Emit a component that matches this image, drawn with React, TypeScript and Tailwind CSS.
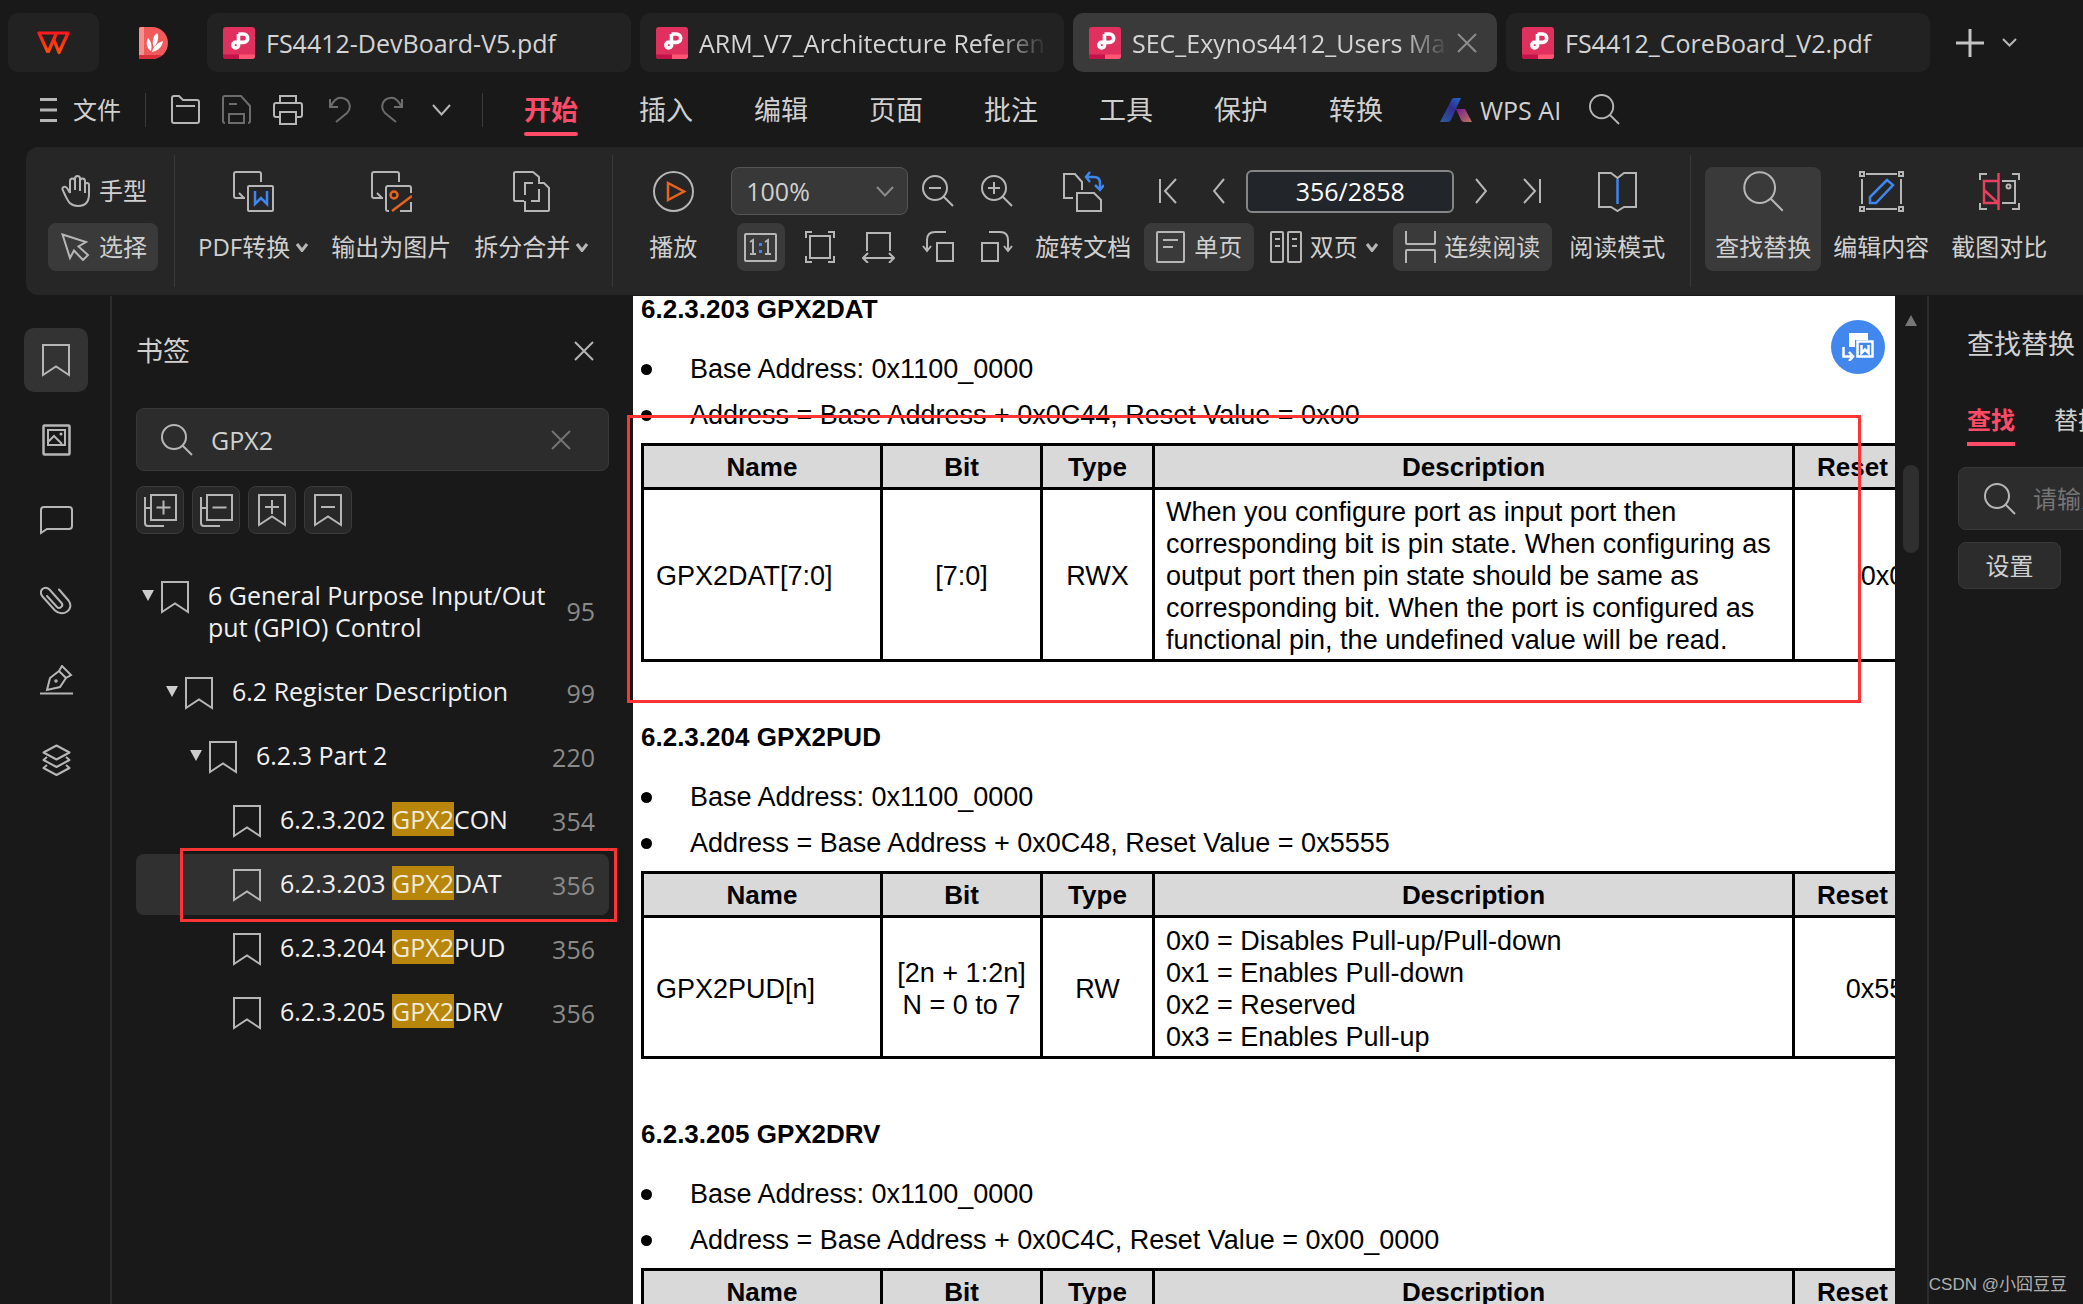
import React from 'react';
import type { ReactNode } from 'react';

const GREY = '#b6b6b6';

function Icon({ w = 32, h = 32, sw = 2, color = GREY, children }: { w?: number; h?: number; sw?: number; color?: string; children: ReactNode }) {
  return (
    <svg width={w} height={h} viewBox={`0 0 ${w} ${h}`} fill="none" stroke={color} strokeWidth={sw} className="shrink-0" aria-hidden="true">
      {children}
    </svg>
  );
}

const Chevron = ({ w = 12, h = 8, sw = 2, color = GREY }: { w?: number; h?: number; sw?: number; color?: string }) => (
  <Icon w={w} h={h} sw={sw} color={color}>
    <path d={`M1 1L${w / 2} ${h - 1.5}L${w - 1} 1`} />
  </Icon>
);

const SearchIcon = ({ s = 32, color = GREY }: { s?: number; color?: string }) => (
  <svg width={s} height={s} viewBox="0 0 32 32" fill="none" stroke={color} strokeWidth={s > 32 ? 1.6 : 2} className="shrink-0" aria-hidden="true">
    <circle cx="13" cy="13" r="12" />
    <path d="M21.5 21.5L31 31" />
  </svg>
);

const Cross = ({ s = 20, color = GREY }: { s?: number; color?: string }) => (
  <Icon w={s} h={s} color={color}>
    <path d={`M1 1L${s - 1} ${s - 1}M${s - 1} 1L1 ${s - 1}`} />
  </Icon>
);

const PdfIcon = () => (
  <svg width="32" height="32" viewBox="0 0 32 32" fill="none" className="shrink-0" aria-hidden="true">
    <rect width="32" height="32" rx="3" fill="#e0315e" />
    <path d="M0 27.500H16V32H3Q0 32 0 29Z" fill="#c4134a" />
    <path d="M16 27.500H32V29Q32 32 29 32H16Z" fill="#ff5575" />
    <path d="M15.500 7H20.500A4.200 4.200 0 0 1 20.500 15.400H11.500A2.900 2.900 0 1 0 15.500 19V7" stroke="#fff" strokeWidth="3.600" strokeLinejoin="round" />
  </svg>
);

const BookmarkIcon = ({ inner }: { inner?: 'plus' | 'minus' }) => (
  <Icon w={28} h={33}>
    <path d="M1 1H27V31L14 22.500L1 31Z" />
    {inner && <path d={inner === 'plus' ? 'M7 13H21M14 6V20' : 'M7 13H21'} />}
  </Icon>
);

const StackIcon = ({ plus }: { plus: boolean }) => (
  <Icon w={33} h={33}>
    <rect x="7" y="1" width="25" height="25" />
    <path d="M1 3V29Q1 32 4 32H20M1 14H7" />
    <path d={plus ? 'M12.500 13.500H26.500M19.500 6.500V20.500' : 'M12.500 13.500H26.500'} />
  </Icon>
);

const tabs = [
  { name: 'FS4412-DevBoard-V5.pdf' },
  { name: 'ARM_V7_Architecture Reference', fade: true },
  { name: 'SEC_Exynos4412_Users Manual', active: true, fade: true },
  { name: 'FS4412_CoreBoard_V2.pdf' },
];

function TabBar() {
  return (
    <header className="flex h-[76px] shrink-0 items-start pt-[13px] pl-2">
      <button aria-label="WPS" className="flex h-[59px] w-[91px] shrink-0 items-center justify-center rounded-[10px] bg-[#222222]">
        <svg width="33" height="24" viewBox="0 0 33 24" fill="none" aria-hidden="true">
          <defs>
            <linearGradient id="wps" x1="0" y1="0" x2="0" y2="24" gradientUnits="userSpaceOnUse">
              <stop stopColor="#ff1420" />
              <stop offset="1" stopColor="#ff5400" />
            </linearGradient>
          </defs>
          <path d="M11 21.500L2 2H19.500L11 21.500M17 9L22 21.500L31 2H19.500L16 11" stroke="url(#wps)" strokeWidth="3.200" strokeLinejoin="round" />
        </svg>
      </button>
      <button aria-label="稻壳" className="ml-10 flex h-[59px] shrink-0 items-center">
        <svg width="29" height="32" viewBox="0 0 29 32" aria-hidden="true">
          <path d="M2 0H13C22 0 29 7 29 16S22 32 13 32H2Q0 32 0 30V2Q0 0 2 0Z" fill="#f05a5a" />
          <path d="M0 2Q0 0 2 0H5V32H2Q0 32 0 30Z" fill="#f79090" />
          <path d="M0 28H23Q18 32 13 32H2Q0 32 0 30Z" fill="#d92f3a" />
          <path d="M18 6C21 10 18 18 14.500 20C13 14 14 9 18 6ZM9 11C13 15 13 20 12 24C7 21 7 15 9 11ZM24 14C23 21 18 24 13 25C15 18 19 16 24 14Z" fill="#fff" />
        </svg>
      </button>
      <nav aria-label="文档" className="ml-[39px] flex gap-[9px]">
        {tabs.map((t) => (
          <div key={t.name} className={t.active ? 'flex h-[59px] w-[424px] items-center rounded-[10px] bg-[#3a3a3a] px-4' : 'flex h-[59px] w-[424px] items-center rounded-[10px] bg-[#222222] px-4'}>
            <PdfIcon />
            <button
              className={
                t.fade
                  ? 'ml-[11px] min-w-0 flex-1 overflow-hidden text-left text-[25px] leading-[34px] whitespace-nowrap text-[#d4d4d4] [mask-image:linear-gradient(to_right,black_85%,transparent)]'
                  : 'ml-[11px] min-w-0 flex-1 overflow-hidden text-left text-[25px] leading-[34px] whitespace-nowrap text-[#d4d4d4]'
              }
            >
              {t.name}
            </button>
            {t.active && (
              <button aria-label="关闭标签" className="mr-1 ml-2">
                <Cross s={20} color="#8c8c8c" />
              </button>
            )}
          </div>
        ))}
      </nav>
      <button aria-label="新建" className="ml-[26px] flex h-[59px] items-center">
        <Icon w={28} h={28} sw={3} color="#c4c4c4">
          <path d="M14 0V28M0 14H28" />
        </Icon>
      </button>
      <button aria-label="更多标签" className="ml-[18px] flex h-[59px] items-center">
        <Chevron w={15} h={9} />
      </button>
    </header>
  );
}

const menus = ['开始', '插入', '编辑', '页面', '批注', '工具', '保护', '转换'];

function MenuBar() {
  return (
    <div className="flex h-[71px] shrink-0 items-center pb-1 pl-10">
      <button className="flex items-center gap-4 text-[24px] leading-9">
        <Icon w={17} h={24} sw={3}>
          <path d="M0 1.500H17M0 12H17M0 22.500H17" />
        </Icon>
        文件
      </button>
      <span className="mr-[25px] ml-6 h-[34px] w-px bg-[#3a3a3a]" />
      <div className="flex items-center gap-[22px]">
        <button aria-label="打开">
          <Icon w={29} h={29}>
            <path d="M1 26V3Q1 1 3 1H8L12 5H26Q28 5 28 7V26Q28 28 26 28H3Q1 28 1 26ZM5 11H24" />
          </Icon>
        </button>
        <button aria-label="保存">
          <Icon w={29} h={29} color="#6c6c6c">
            <path d="M3 28Q1 28 1 26V3Q1 1 3 1H19L28 11V26Q28 28 26 28M7 9H15M7 28V19H22V28ZM7 28" />
          </Icon>
        </button>
        <button aria-label="打印">
          <Icon w={30} h={30}>
            <path d="M7 8V1H23V8M6 22H3Q1 22 1 20V10Q1 8 3 8H27Q29 8 29 10V20Q29 22 27 22H24M7 17H23V29H7Z" />
          </Icon>
        </button>
        <button aria-label="撤销" className="ml-1">
          <Icon w={22} h={27} color="#6c6c6c">
            <path d="M1 3V11H9M2 10C5 4 9 1 13 2C21 3 23 12 18 17L7 26" />
          </Icon>
        </button>
        <button aria-label="恢复" className="ml-2">
          <Icon w={22} h={27} color="#6c6c6c">
            <path d="M21 3V11H13M20 10C17 4 13 1 9 2C1 3 -1 12 4 17L15 26" />
          </Icon>
        </button>
        <button aria-label="更多" className="ml-[7px]">
          <Chevron w={19} h={12} />
        </button>
      </div>
      <span className="mr-[41px] ml-[31px] h-[34px] w-px bg-[#3a3a3a]" />
      <nav className="flex gap-[61px] text-[27px] leading-[40px]">
        {menus.map((m, i) => (
          <button key={m} className={i === 0 ? 'relative font-bold whitespace-nowrap text-[#ff4a68]' : 'whitespace-nowrap'}>
            {m}
            {i === 0 && <span className="absolute inset-x-0 -bottom-1.5 h-1 rounded-xs bg-[#ff4a68]" />}
          </button>
        ))}
      </nav>
      <button className="ml-[57px] flex items-center gap-2 text-[25px] leading-9 whitespace-nowrap">
        <svg width="32" height="24" viewBox="0 0 32 24" aria-hidden="true">
          <defs>
            <linearGradient id="aiBlue" x1="0" y1="24" x2="20" y2="0" gradientUnits="userSpaceOnUse">
              <stop stopColor="#2c5c9c" />
              <stop offset="0.6" stopColor="#322d92" />
              <stop offset="1" stopColor="#1f66c8" />
            </linearGradient>
            <linearGradient id="aiPink" x1="18" y1="11" x2="30" y2="24" gradientUnits="userSpaceOnUse">
              <stop stopColor="#7a2090" />
              <stop offset="1" stopColor="#b8705c" />
            </linearGradient>
          </defs>
          <path d="M12 1Q13 0 14 0H21L11 22Q10 24 8 24H0Z" fill="url(#aiBlue)" />
          <path d="M16 11H25L32 24H24Q22 24 21 22Z" fill="url(#aiPink)" />
        </svg>
        WPS AI
      </button>
      <button aria-label="搜索功能" className="ml-7">
        <SearchIcon s={31} />
      </button>
    </div>
  );
}

const Divider = () => <span className="h-[132px] w-px shrink-0 bg-[#393939]" />;

function BigTool({ label, icon, menu, active }: { label: string; icon: ReactNode; menu?: boolean; active?: boolean }) {
  return (
    <button className={active ? 'flex h-[104px] shrink-0 flex-col items-center gap-2 rounded-lg bg-[#3a3a3a] px-[10px]' : 'flex h-[104px] shrink-0 flex-col items-center gap-2'}>
      <span className="flex h-12 items-center">{icon}</span>
      <span className="flex h-12 items-center gap-1.5 whitespace-nowrap">
        {label}
        {menu && <Chevron w={12} h={9} sw={3} />}
      </span>
    </button>
  );
}

function Ribbon() {
  return (
    <section aria-label="工具栏" className="ml-[26px] flex h-[148px] shrink-0 items-center overflow-hidden rounded-l-xl bg-[#262626] text-[24px] leading-9">
      <div className="mr-4 ml-[22px] flex w-[110px] shrink-0 flex-col gap-2 pb-1">
        <button className="flex h-12 items-center gap-[9px] rounded-lg px-[13px] whitespace-nowrap">
          <Icon w={29} h={32}>
            <path d="M9 18V6a2.500 2.500 0 0 1 5 0V15M14 15V3.500a2.500 2.500 0 0 1 5 0V15M19 16V6a2.500 2.500 0 0 1 5 0V10M24 18V10a2 2 0 0 1 4 0V19C28 27 24 31 17 31C9 31 7 26 5 22L1.500 14.500C1 12 4 10.500 6 13L9 18" />
          </Icon>
          手型
        </button>
        <button className="flex h-12 items-center gap-[9px] rounded-lg bg-[#3a3a3a] px-[13px] whitespace-nowrap">
          <Icon w={29} h={28}>
            <path d="M1.500 1.500L25 9L17.500 13.500L27 22L22 27L13 17.500L9 25Z" />
          </Icon>
          选择
        </button>
      </div>
      <Divider />
      <div className="flex shrink-0 gap-[23px] pr-6 pb-1 pl-[23px]">
        <BigTool
          label="PDF转换"
          menu
          icon={
            <Icon w={41} h={41}>
              <path d="M12 27H3Q1 27 1 25V3Q1 1 3 1H26Q28 1 28 3V11M6 22L11 27" />
              <rect x="15" y="15" width="25" height="25" rx="1" />
              <path d="M22 20V33L28 27L34 33V20" stroke="#3f86f0" strokeWidth="2.500" />
            </Icon>
          }
        />
        <BigTool
          label="输出为图片"
          icon={
            <Icon w={41} h={41}>
              <path d="M12 27H3Q1 27 1 25V3Q1 1 3 1H26Q28 1 28 3V11M6 22L11 27M18 40H17Q15 40 15 38V17Q15 15 17 15H38Q40 15 40 17V22M40 31V40H29" />
              <circle cx="23" cy="24" r="3.500" stroke="#e8641e" strokeWidth="2.500" />
              <path d="M21 40L41 25" stroke="#e8641e" strokeWidth="2.500" />
            </Icon>
          }
        />
        <BigTool
          label="拆分合并"
          menu
          icon={
            <Icon w={37} h={41}>
              <path d="M11 30H2Q1 30 1 28V2Q1 1 3 1H20L26 6V12H31L36 17V39Q36 40 34 40H12V30M12 24V12H20M26 18V30H18" />
            </Icon>
          }
        />
      </div>
      <Divider />
      <div className="ml-9 flex shrink-0 pb-1">
        <BigTool
          label="播放"
          icon={
            <Icon w={41} h={41}>
              <circle cx="20.500" cy="20.500" r="19.500" />
              <path d="M15 12V29L31 20.500Z" stroke="#e8641e" strokeWidth="2.500" />
            </Icon>
          }
        />
      </div>
      <div className="ml-[34px] grid w-[295px] shrink-0 grid-cols-5 gap-y-2 pb-1">
        <div className="relative col-span-3 h-12">
          <select aria-label="缩放比例" defaultValue="100%" className="h-12 w-full appearance-none rounded-lg border border-[#555555] bg-[#383838] px-3.5 text-[25px] leading-9">
            <option>100%</option>
          </select>
          <span className="pointer-events-none absolute top-[19px] right-[14px]">
            <Chevron w={18} h={11} color="#8a8a8a" />
          </span>
        </div>
        <button aria-label="缩小" className="flex h-12 items-center justify-center">
          <Icon>
            <circle cx="13" cy="13" r="12" />
            <path d="M21.500 21.500L31 31M7 13H19" />
          </Icon>
        </button>
        <button aria-label="放大" className="flex h-12 items-center justify-center">
          <Icon>
            <circle cx="13" cy="13" r="12" />
            <path d="M21.500 21.500L31 31M7 13H19M13 7V19" />
          </Icon>
        </button>
        <button aria-label="实际大小" className="mx-auto flex size-12 items-center justify-center rounded-lg bg-[#3a3a3a]">
          <Icon w={33} h={29}>
            <rect x="1" y="1" width="31" height="27" rx="1" />
            <path d="M6 9L9 7V21M6 21H12M21 9L24 7V21M21 21H27" />
            <path d="M16.500 10V13M16.500 17V20" stroke="#3f86f0" strokeWidth="3" />
          </Icon>
        </button>
        <button aria-label="适合页面" className="flex h-12 items-center justify-center">
          <Icon w={30} h={32}>
            <path d="M1 7V1H7M23 1H29V7M29 25V31H23M7 31H1V25" />
            <rect x="5" y="5" width="20" height="22" />
          </Icon>
        </button>
        <button aria-label="适合宽度" className="flex h-12 items-center justify-center">
          <Icon w={33} h={32}>
            <path d="M5 20V2H28V20M1 27H32M6 22L1 27L6 32M27 22L32 27L27 32" />
          </Icon>
        </button>
        <button aria-label="向左旋转" className="flex h-12 items-center justify-center">
          <Icon>
            <rect x="15" y="12" width="16" height="18" />
            <path d="M24 1H13Q5 1 5 9V20M1 15L5 20L9 15" />
          </Icon>
        </button>
        <button aria-label="向右旋转" className="flex h-12 items-center justify-center">
          <Icon>
            <rect x="1" y="12" width="16" height="18" />
            <path d="M8 1H19Q27 1 27 9V20M23 15L27 20L31 15" />
          </Icon>
        </button>
      </div>
      <div className="ml-[9px] flex shrink-0 pb-1">
        <BigTool
          label="旋转文档"
          icon={
            <Icon w={41} h={41}>
              <path d="M10 27H1V3H12L19 11V19M14 40V22H31L38 29V40Z" />
              <path d="M23 6H31Q37 6 37 12V18M27 1L23 6L27 11M32 14L37 19L41 14" stroke="#3f86f0" strokeWidth="2.500" />
            </Icon>
          }
        />
      </div>
      <div className="ml-[13px] flex w-[408px] shrink-0 flex-col gap-2 pb-1">
        <div className="flex h-12 items-center pr-[11px] pl-[15px]">
          <button aria-label="第一页">
            <Icon w={18} h={26}>
              <path d="M1 1V25M17 1L6 13L17 25" />
            </Icon>
          </button>
          <button aria-label="上一页" className="ml-9">
            <Icon w={12} h={26}>
              <path d="M11 1L1 13L11 25" />
            </Icon>
          </button>
          <input aria-label="页码" defaultValue="356/2858" className="mx-[21px] h-[43px] min-w-0 flex-1 rounded-md border-2 border-[#858585] bg-[#22262b] text-center text-[25px] leading-9 text-white" />
          <button aria-label="下一页">
            <Icon w={12} h={26}>
              <path d="M1 1L11 13L1 25" />
            </Icon>
          </button>
          <button aria-label="最后一页" className="ml-9">
            <Icon w={18} h={26}>
              <path d="M17 1V25M1 1L12 13L1 25" />
            </Icon>
          </button>
        </div>
        <div className="flex h-12 items-center justify-between whitespace-nowrap">
          <button className="flex h-12 items-center gap-[9px] rounded-lg bg-[#3a3a3a] px-3">
            <Icon w={29} h={32}>
              <rect x="1" y="1" width="27" height="30" rx="1" />
              <path d="M7 9H22M7 16H17" />
            </Icon>
            单页
          </button>
          <button className="flex h-12 items-center gap-2">
            <Icon>
              <rect x="1" y="1" width="12" height="30" rx="1" />
              <rect x="18" y="1" width="13" height="30" rx="1" />
              <path d="M5 8H10M5 15H10M22 8H27M22 15H27" />
            </Icon>
            双页
            <Chevron w={12} h={9} sw={3} />
          </button>
          <button className="flex h-12 items-center gap-2 rounded-lg bg-[#3a3a3a] px-3">
            <Icon w={31} h={32}>
              <path d="M1 0V12Q1 13 2 13H29Q30 13 30 12V0M1 32V20Q1 19 2 19H29Q30 19 30 20V32" />
            </Icon>
            连续阅读
          </button>
        </div>
      </div>
      <div className="mr-[25px] ml-[17px] flex shrink-0 pb-1">
        <BigTool
          label="阅读模式"
          icon={
            <Icon w={39} h={41}>
              <path d="M1 2H13L19.500 7L26 2H38V36H26L19.500 40L13 36H1Z" />
              <path d="M19.500 8V33" stroke="#3f86f0" strokeWidth="2.500" />
            </Icon>
          }
        />
      </div>
      <Divider />
      <div className="ml-[14px] flex shrink-0 gap-[22px] pb-1">
        <div className="-mr-[10px]">
          <BigTool label="查找替换" active icon={<SearchIcon s={41} />} />
        </div>
        <BigTool
          label="编辑内容"
          icon={
            <Icon w={45} h={41}>
              <path d="M7 3H38M7 38H38M3 8V33M42 8V33" />
              <path d="M1 1H5V5H1ZM40 1H44V5H40ZM1 36H5V40H1ZM40 36H44V40H40Z" />
              <path d="M11 32V26L28 9L34 14L17 32Z" stroke="#3f86f0" strokeWidth="2.500" />
            </Icon>
          }
        />
        <BigTool
          label="截图对比"
          icon={
            <Icon w={41} h={41}>
              <path d="M1 9V3H8M33 3H40V9M40 32V38H33M8 38H1V32M23 10H36V32H23" />
              <circle cx="29.500" cy="15.500" r="2" />
              <path d="M19.500 2V39M19 10H5V32H19M5 19L19 32" stroke="#e8405c" strokeWidth="2.500" />
            </Icon>
          }
        />
      </div>
    </section>
  );
}

function SideRail() {
  const cell = 'flex size-16 items-center justify-center rounded-[10px]';
  return (
    <aside className="flex w-[112px] shrink-0 flex-col gap-4 border-r-2 border-[#2c2c2c] pt-8 pl-6">
      <button aria-label="书签" className="flex size-16 items-center justify-center rounded-[10px] bg-[#333333]">
        <BookmarkIcon />
      </button>
      <button aria-label="缩略图" className={cell}>
        <Icon w={29} h={32} sw={2.5}>
          <rect x="1.500" y="1.500" width="26" height="29" rx="1" />
          <rect x="6" y="6" width="17" height="15" strokeWidth="2" />
          <path d="M6 18L12 12L20 20" strokeWidth="2" />
          <circle cx="19" cy="10" r="0.800" strokeWidth="1.500" />
        </Icon>
      </button>
      <button aria-label="批注" className={cell}>
        <Icon w={33} h={29}>
          <path d="M1 27V4Q1 1 4 1H29Q32 1 32 4V20Q32 23 29 23H7Z" />
        </Icon>
      </button>
      <button aria-label="附件" className={cell}>
        <Icon w={32} h={30}>
          <path d="M7 11L17 22C19.500 24.500 24 21 21.500 18L9.500 4.500C4.500 -0.500 -2 6 2.500 11.500L15 25.500C23 33 35 24 28.500 15.500L19 4.500" strokeLinecap="round" />
        </Icon>
      </button>
      <button aria-label="签名" className={cell}>
        <Icon w={33} h={30}>
          <path d="M7 25L10 13L19 6L26 13L20 22ZM19 6L22 1L31 10L26 13M0 28.500H33" />
          <circle cx="16" cy="16" r="0.800" />
        </Icon>
      </button>
      <button aria-label="图层" className={cell}>
        <Icon w={29} h={32}>
          <path d="M14.500 1.500L27.500 8.500L14.500 15.500L1.500 8.500ZM5 13L1.500 16L14.500 23L27.500 16L24 13M5 21L1.500 24L14.500 31L27.500 24L24 21" strokeLinejoin="round" />
        </Icon>
      </button>
    </aside>
  );
}

type TreeNode = { indent: string; label: ReactNode; page: number; open?: boolean; selected?: boolean };

const Hit = () => <mark className="bg-[#b8860b] text-[#f0ead8]">GPX2</mark>;

const nodes: TreeNode[] = [
  { indent: 'pl-1.5', label: <>6 General Purpose Input/Out<br />put (GPIO) Control</>, page: 95, open: true },
  { indent: 'pl-[30px]', label: '6.2 Register Description', page: 99, open: true },
  { indent: 'pl-[54px]', label: '6.2.3 Part 2', page: 220, open: true },
  { indent: 'pl-[78px]', label: <>6.2.3.202 <Hit />CON</>, page: 354 },
  { indent: 'pl-[78px]', label: <>6.2.3.203 <Hit />DAT</>, page: 356, selected: true },
  { indent: 'pl-[78px]', label: <>6.2.3.204 <Hit />PUD</>, page: 356 },
  { indent: 'pl-[78px]', label: <>6.2.3.205 <Hit />DRV</>, page: 356 },
];

function BookmarkPanel() {
  const tool = 'flex size-12 items-center justify-center rounded-lg border border-[#3a3a3a] bg-[#282828]';
  return (
    <section aria-label="书签" className="w-[521px] shrink-0 px-6 pt-[35px]">
      <div className="flex items-center justify-between pr-[15px]">
        <h2 className="text-[27px] leading-[40px]">书签</h2>
        <button aria-label="关闭">
          <Cross s={20} />
        </button>
      </div>
      <div className="mt-[37px] flex h-[63px] items-center rounded-lg border border-[#383838] bg-[#2c2c2c] pr-[37px] pl-6">
        <SearchIcon s={32} />
        <input aria-label="搜索书签" defaultValue="GPX2" className="ml-[18px] min-w-0 flex-1 text-[25px] leading-9" />
        <button aria-label="清除">
          <Cross s={20} color="#747474" />
        </button>
      </div>
      <div className="mt-[15px] flex gap-2">
        <button aria-label="全部展开" className={tool}><StackIcon plus /></button>
        <button aria-label="全部折叠" className={tool}><StackIcon plus={false} /></button>
        <button aria-label="添加书签" className={tool}><BookmarkIcon inner="plus" /></button>
        <button aria-label="删除书签" className={tool}><BookmarkIcon inner="minus" /></button>
      </div>
      <ul className="mt-8">
        {nodes.map((n, i) => (
          <li key={i} className={i === 0 ? 'relative pb-1.5' : 'relative pb-[3px]'}>
            <div className={n.selected ? 'rounded-lg bg-[#303030]' : ''}>
              <div className={`flex items-start py-[13px] pr-3.5 ${n.indent}`}>
                <span className="flex h-8 w-[19px] shrink-0 items-center">
                  {n.open && (
                    <svg width="12" height="12" viewBox="0 0 12 12" aria-hidden="true">
                      <path d="M0 1H12L6 12Z" fill="#cccccc" />
                    </svg>
                  )}
                </span>
                <span className="mt-0.5 flex"><BookmarkIcon /></span>
                <a href="#bookmark" className="ml-[19px] min-w-0 flex-1 text-[25px] leading-8 whitespace-nowrap text-[#f0f0f0]">{n.label}</a>
                <span className="self-center text-[25px] leading-8 text-[#8a8a8a]">{n.page}</span>
              </div>
            </div>
            {n.selected && <span className="pointer-events-none absolute -top-1.5 -right-2 -bottom-1 left-[44px] border-[3px] border-[#ff3434]" />}
          </li>
        ))}
      </ul>
    </section>
  );
}

type Row = { name: string; bit: ReactNode; type: string; desc: string[]; reset: string };

function RegisterSection({ title, address, row, rowClass }: { title: string; address: string; row?: Row; rowClass?: string }) {
  const th = 'border-[3px] border-black bg-[#d9d9d9] p-0 font-bold';
  const td = 'border-[3px] border-black px-0 pt-[3px] pb-0 text-center';
  return (
    <section>
      <h3 className="text-[26px] leading-[26px] font-bold">{title}</h3>
      <ul className="mt-6 text-[27px] leading-[46px]">
        {['Base Address: 0x1100_0000', address].map((line) => (
          <li key={line} className="flex items-center whitespace-nowrap">
            <span className="mr-[38px] size-[11px] rounded-full bg-black" />
            {line}
          </li>
        ))}
      </ul>
      <table className="mt-[5px] w-[1344px] table-fixed border-collapse text-[27px] leading-8">
        <colgroup>
          <col className="w-[239px]" />
          <col className="w-[160px]" />
          <col className="w-[112px]" />
          <col className="w-[640px]" />
          <col className="w-[193px]" />
        </colgroup>
        <thead>
          <tr className="h-11 text-[26px]">
            <th className={th}>Name</th>
            <th className={th}>Bit</th>
            <th className={th}>Type</th>
            <th className={th}>Description</th>
            <th className={th}>Reset Value</th>
          </tr>
        </thead>
        {row && (
          <tbody>
            <tr className={rowClass}>
              <td className="border-[3px] border-black pt-[3px] pr-0 pb-0 pl-3">{row.name}</td>
              <td className={td}>{row.bit}</td>
              <td className={td}>{row.type}</td>
              <td className="border-[3px] border-black pt-[3px] pr-0 pb-0 pl-[11px] whitespace-nowrap">
                {row.desc.map((d) => <div key={d}>{d}</div>)}
              </td>
              <td className={td}>{row.reset}</td>
            </tr>
          </tbody>
        )}
      </table>
    </section>
  );
}

function DocumentView() {
  return (
    <main className="relative min-w-0 flex-1 bg-white font-['Liberation_Sans',sans-serif] text-black">
      <div className="flex h-full flex-col gap-[62px] overflow-hidden pl-2">
        <RegisterSection
          title="6.2.3.203 GPX2DAT"
          address="Address = Base Address + 0x0C44, Reset Value = 0x00"
          rowClass="h-[172px]"
          row={{
            name: 'GPX2DAT[7:0]',
            bit: '[7:0]',
            type: 'RWX',
            desc: [
              'When you configure port as input port then',
              'corresponding bit is pin state. When configuring as',
              'output port then pin state should be same as',
              'corresponding bit. When the port is configured as',
              'functional pin, the undefined value will be read.',
            ],
            reset: '0x00',
          }}
        />
        <RegisterSection
          title="6.2.3.204 GPX2PUD"
          address="Address = Base Address + 0x0C48, Reset Value = 0x5555"
          rowClass="h-[141px]"
          row={{
            name: 'GPX2PUD[n]',
            bit: <>[2n + 1:2n]<br />N = 0 to 7</>,
            type: 'RW',
            desc: ['0x0 = Disables Pull-up/Pull-down', '0x1 = Enables Pull-down', '0x2 = Reserved', '0x3 = Enables Pull-up'],
            reset: '0x5555',
          }}
        />
        <RegisterSection title="6.2.3.205 GPX2DRV" address="Address = Base Address + 0x0C4C, Reset Value = 0x00_0000" />
      </div>
      <span className="pointer-events-none absolute top-[119px] right-[34px] -left-[6px] h-[288px] border-[3px] border-[#ff3434]" />
      <button aria-label="转换为 Word" className="absolute top-6 right-[10px] flex size-[54px] items-center justify-center rounded-full bg-[#4187ee]">
        <svg width="32" height="28" viewBox="0 0 32 28" fill="none" aria-hidden="true">
          <path d="M7 0H26V7H13V14H7Z" fill="#fff" />
          <rect x="15.500" y="8.500" width="15" height="15" stroke="#fff" strokeWidth="2.500" />
          <path d="M19.500 12V20L23 16.500L26.500 20V12M1.500 14V23.500H10M7 19L11 23.500L7 28" stroke="#fff" strokeWidth="2.500" />
        </svg>
      </button>
    </main>
  );
}

function FindPanel() {
  return (
    <aside className="w-[156px] shrink-0 overflow-hidden border-l-2 border-[#2c2c2c] pt-7 text-[24px] leading-9 whitespace-nowrap">
      <h2 className="pl-[38px] text-[27px] leading-[40px]">查找替换</h2>
      <div className="mt-[38px] flex gap-[39px] pl-[38px]">
        <button className="relative font-bold text-[#ff4a68]">
          查找
          <span className="absolute inset-x-0 -bottom-2 h-1 bg-[#ff4a68]" />
        </button>
        <button>替换</button>
      </div>
      <div className="mt-[29px] ml-[29px] flex h-[63px] w-[400px] items-center rounded-lg border border-[#383838] bg-[#2c2c2c] pl-[25px]">
        <SearchIcon s={32} />
        <input aria-label="查找内容" placeholder="请输入查找内容" className="ml-[17px] min-w-0 flex-1 placeholder:text-[#757575]" />
      </div>
      <button className="mt-3 ml-[29px] h-[47px] w-[103px] rounded-lg border border-[#383838] bg-[#2c2c2c]">设置</button>
    </aside>
  );
}

export default function App() {
  return (
    <div className="relative flex h-screen flex-col overflow-hidden bg-[#191919] font-['Open_Sans','Noto_Sans_CJK_SC',sans-serif] text-[#d0d0d0]">
      <TabBar />
      <MenuBar />
      <Ribbon />
      <div className="mt-px flex min-h-0 flex-1">
        <SideRail />
        <BookmarkPanel />
        <DocumentView />
        <div className="flex w-8 shrink-0 flex-col items-center pt-[19px]">
          <svg width="12" height="11" viewBox="0 0 12 11" aria-hidden="true">
            <path d="M6 0L12 11H0Z" fill="#777777" />
          </svg>
          <div className="mt-[139px] h-[88px] w-4 rounded-full bg-[#2f2f2f]" />
        </div>
        <FindPanel />
      </div>
      <p className="absolute right-4 bottom-[7px] font-['Liberation_Sans','Noto_Sans_CJK_SC',sans-serif] text-[17px] leading-6 text-[#b0b0b0]">CSDN @小囧豆豆</p>
    </div>
  );
}
